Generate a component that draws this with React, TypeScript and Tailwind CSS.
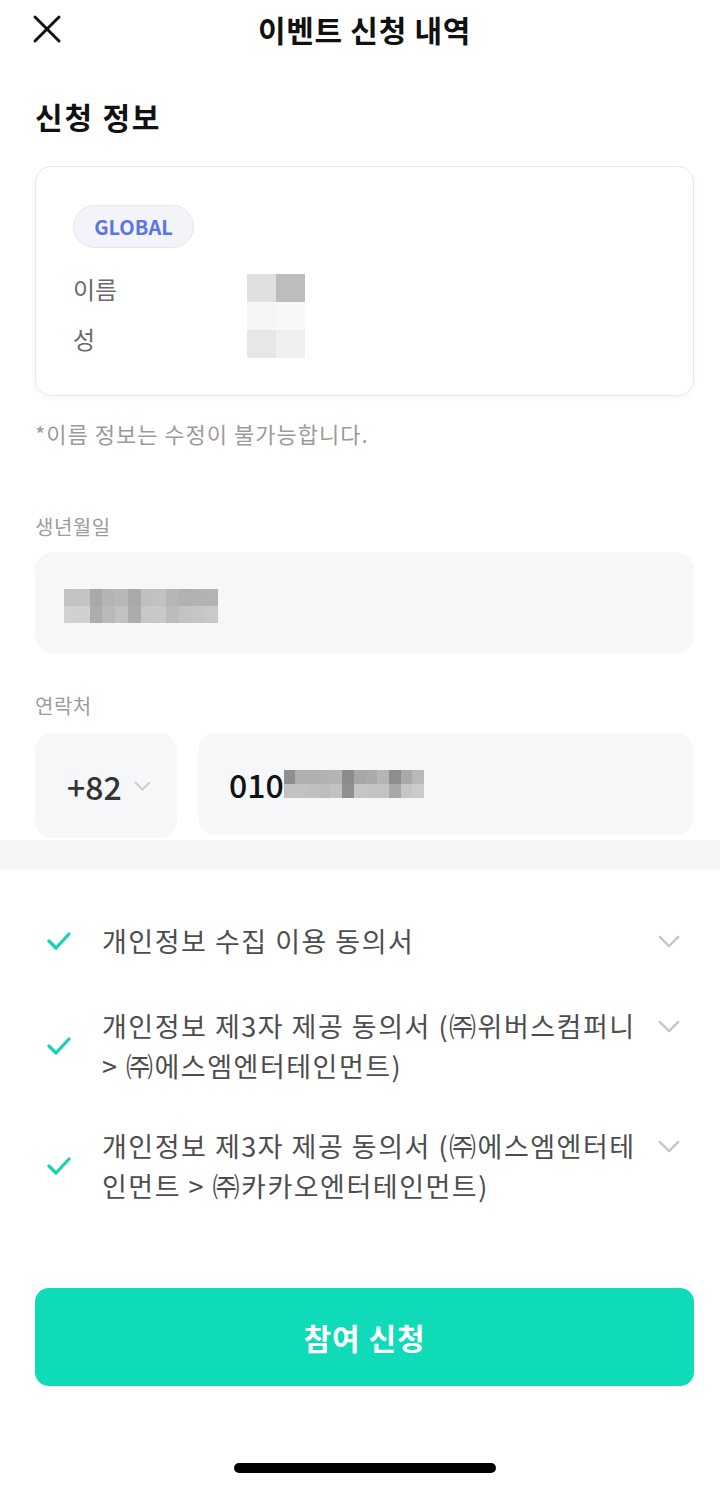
const FONT = { fontFamily: '"Noto Sans CJK KR", "Noto Sans", sans-serif' };

// 모자이크 처리된 값 (블러 대신 회색 격자)
const Mosaic = ({ cols, rows, cell, colors }: { cols: number; rows: number; cell: [number, number]; colors: string[] }) => (
  <div
    className="grid shrink-0"
    style={{ gridTemplateColumns: `repeat(${cols}, ${cell[0]}px)`, gridTemplateRows: `repeat(${rows}, ${cell[1]}px)` }}
  >
    {colors.map((c, i) => (
      <div key={i} style={{ background: c }} />
    ))}
  </div>
);

const Chevron = ({ className }: { className?: string }) => (
  <svg className={className} viewBox="0 0 24 14" fill="none" stroke="currentColor" strokeWidth="2.4" strokeLinecap="round" strokeLinejoin="round">
    <polyline points="2,2 12,12 22,2" />
  </svg>
);

const Check = () => (
  <svg className="w-[24px] h-[20px] text-[#16d3b1]" viewBox="0 0 24 20" fill="none" stroke="currentColor" strokeWidth="3.2" strokeLinecap="round" strokeLinejoin="round">
    <polyline points="2,10 9,17 22,3" />
  </svg>
);

const agreements = [
  { text: "개인정보 수집 이용 동의서", mt: "mt-[51px]" },
  { text: "개인정보 제3자 제공 동의서 (㈜위버스컴퍼니 > ㈜에스엠엔터테인먼트)", mt: "mt-[45px]" },
  { text: "개인정보 제3자 제공 동의서 (㈜에스엠엔터테인먼트 > ㈜카카오엔터테인먼트)", mt: "mt-[40px]" },
];

export default function App() {
  return (
    <div className="w-[720px] h-[1488px] bg-white overflow-hidden" style={FONT}>
      <div className="pl-[35px] pr-[26px]">
        {/* 상단 헤더 */}
        <div className="grid grid-cols-[60px_1fr_60px] items-center h-[58px]">
          <svg className="w-[32px] h-[32px] -ml-[4px]" viewBox="0 0 32 32" fill="none" stroke="#111" strokeWidth="3" strokeLinecap="round">
            <line x1="4" y1="4" x2="28" y2="28" />
            <line x1="28" y1="4" x2="4" y2="28" />
          </svg>
          <h1 className="text-center text-[30px] leading-[36px] font-bold text-[#111] tracking-[0.7px]">이벤트 신청 내역</h1>
          <div />
        </div>

        <div className="h-[108px] pt-[40px]">
          <h2 className="text-[30px] leading-[36px] font-bold text-[#111] tracking-[1.8px]">신청 정보</h2>
        </div>

        {/* 이름 카드 */}
        <div className="h-[230px] rounded-[16px] border border-[#e7e8ec] shadow-[0_2px_6px_rgba(0,0,0,0.04)] pl-[37px] pt-[38px]">
          <div className="inline-flex items-center justify-center w-[121px] h-[43px] rounded-full bg-[#f3f4f9] border border-[#e4e7f0] text-[20px] font-bold text-[#5b74e6]">
            GLOBAL
          </div>
          <div className="flex">
            <div className="w-[174px] mt-[16px] text-[24px] text-[#6a6a6a]">
              <div className="h-[50px] leading-[50px]">이름</div>
              <div className="h-[50px] leading-[50px]">성</div>
            </div>
            <div className="mt-[26px]">
              <Mosaic cols={2} rows={3} cell={[29, 28]} colors={["#e0e0e0", "#bdbdbd", "#f6f6f6", "#f8f8f8", "#e7e7e7", "#efefef"]} />
            </div>
          </div>
        </div>

        <p className="mt-[23px] text-[22px] leading-[28px] text-[#9b9b9b] tracking-[1px]">*이름 정보는 수정이 불가능합니다.</p>

        <p className="mt-[67px] text-[20px] leading-[26px] text-[#9b9b9b] tracking-[0.5px]">생년월일</p>
        <div className="mt-[12px] h-[101px] rounded-[18px] bg-[#f6f7f9] flex items-center pl-[29px] pt-[6px]">
          <Mosaic
            cols={12}
            rows={2}
            cell={[12.8, 17]}
            colors={[
              "#c3c3c3", "#c4c4c4", "#a9a9a9", "#b4b4b4", "#b8b8b8", "#a9a9a9", "#c0c0c0", "#c2c2c2", "#b6b6b6", "#b1b1b1", "#b2b2b2", "#b3b3b3",
              "#d1d1d1", "#d0d0d0", "#acacac", "#b9b9b9", "#c2c2c2", "#acacac", "#c7c7c7", "#c9c9c9", "#bcbcbc", "#c4c4c4", "#c6c6c6", "#c9c9c9",
            ]}
          />
        </div>

        <p className="mt-[40px] text-[20px] leading-[26px] text-[#9b9b9b] tracking-[0.5px]">연락처</p>
        <div className="mt-[14px] flex gap-[21px]">
          <div className="w-[142px] h-[105px] rounded-[18px] bg-[#f6f7f9] flex items-center pl-[32px] gap-[12px]">
            <span className="text-[32px] font-medium text-[#333]">+82</span>
            <Chevron className="w-[17px] h-[10px] text-[#c9c9c9]" />
          </div>
          <div className="flex-1 h-[102px] rounded-[18px] bg-[#f6f7f9] flex items-center pl-[31px]">
            <span className="text-[32px] font-medium text-[#111]">010</span>
            <Mosaic
              cols={12}
              rows={2}
              cell={[11.7, 14]}
              colors={[
                "#8f8f8f", "#afafaf", "#b0b0b0", "#b2b2b2", "#b4b4b4", "#8c8c8c", "#a7a7a7", "#aaaaaa", "#b6b6b6", "#8e8e8e", "#a9a9a9", "#b9b9b9",
                "#c2c2c2", "#c2c2c2", "#c0c0c0", "#bdbdbd", "#c2c2c2", "#8f8f8f", "#c6c6c6", "#c4c4c4", "#c3c3c3", "#a8a8a8", "#c5c5c5", "#cbcbcb",
              ]}
            />
          </div>
        </div>
      </div>

      {/* 구분 띠 */}
      <div className="mt-[2px] h-[30px] bg-[#f5f5f7]" />

      <div className="pl-[35px] pr-[26px]">
        {agreements.map((a) => (
          <div key={a.text} className={`${a.mt} flex items-center`}>
            <div className="w-[67px] pl-[12px] flex items-center">
              <Check />
            </div>
            <p className="w-[545px] text-[27px] leading-[40px] text-[#4d4d4d] tracking-[1.5px]">{a.text}</p>
            <div className="self-start h-[40px] flex items-center ml-[10px]">
              <Chevron className="w-[24px] h-[13px] text-[#c6c6c6]" />
            </div>
          </div>
        ))}

        <button className="mt-[82px] w-full h-[98px] rounded-[14px] bg-[#0fdbb9] text-white text-[30px] font-bold tracking-[1px]">
          참여 신청
        </button>

        <div className="mt-[77px] flex justify-center">
          <div className="w-[262px] h-[10px] rounded-full bg-black" />
        </div>
      </div>
    </div>
  );
}
